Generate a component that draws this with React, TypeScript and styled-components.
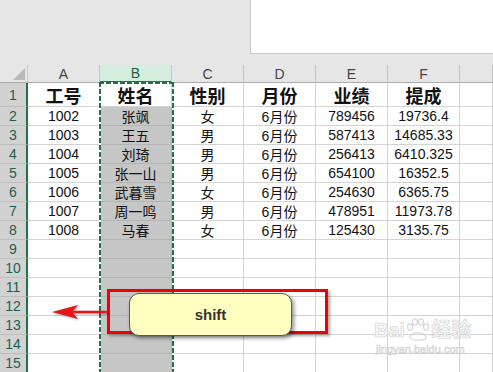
import React from 'react'
import styled, { createGlobalStyle } from 'styled-components'

const GlobalStyle = createGlobalStyle`
  body {
    margin: 0;
    overflow: hidden;
    background: #fff;
    font-family: "Liberation Sans", "Noto Sans CJK SC", sans-serif;
  }
`

const columns = ['A', 'B', 'C', 'D', 'E', 'F']

const rows: string[][] = [
  ['工号', '姓名', '性别', '月份', '业绩', '提成'],
  ['1002', '张飒', '女', '6月份', '789456', '19736.4'],
  ['1003', '王五', '男', '6月份', '587413', '14685.33'],
  ['1004', '刘琦', '男', '6月份', '256413', '6410.325'],
  ['1005', '张一山', '男', '6月份', '654100', '16352.5'],
  ['1006', '武暮雪', '女', '6月份', '254630', '6365.75'],
  ['1007', '周一鸣', '男', '6月份', '478951', '11973.78'],
  ['1008', '马春', '女', '6月份', '125430', '3135.75'],
]

const TOTAL_ROWS = 15

const App = () => {
  const sheetRows = Array.from({ length: TOTAL_ROWS }, (_, i) => rows[i] || ['', '', '', '', '', ''])

  return (
    <Page>
      <GlobalStyle />
      <Ribbon>
        <FormulaBox />
      </Ribbon>

      <Sheet>
        <Corner>
          <svg width="28" height="18" viewBox="0 0 28 18">
            <polygon points="25,3 25,15 13,15" fill="#b9b9b9" />
          </svg>
        </Corner>
        {columns.map((c) => (
          <ColHead key={c} $active={c === 'B'}>
            {c}
          </ColHead>
        ))}
        <ColHead $active={false} />

        {sheetRows.map((cells, r) => (
          <React.Fragment key={r}>
            <RowHead>{r + 1}</RowHead>
            {cells.map((text, c) => (
              <Cell key={c} $title={r === 0} $selected={c === 1 && r > 0}>
                {text}
              </Cell>
            ))}
            <Cell $title={false} $selected={false} />
          </React.Fragment>
        ))}
      </Sheet>

      <MarchingAnts />

      <RedFrame />
      <Callout>shift</Callout>
      <Arrow width="64" height="24" viewBox="0 0 64 24">
        <line x1="60" y1="12" x2="24" y2="12" stroke="#e8141b" strokeWidth="2.5" />
        <polygon points="4,12 30,5 24,12 30,19" fill="#e8141b" />
      </Arrow>

      <Watermark>
        <WatermarkLogo>
          Bai
          <svg width="26" height="24" viewBox="0 0 26 24">
            <g fill="none" stroke="#d6d6d6" strokeWidth="1.2">
              <ellipse cx="5" cy="9" rx="2.5" ry="3.2" />
              <ellipse cx="10" cy="4" rx="2.5" ry="3.2" />
              <ellipse cx="16" cy="4" rx="2.5" ry="3.2" />
              <ellipse cx="21" cy="9" rx="2.5" ry="3.2" />
              <path d="M5 20 C5 13 21 13 21 20 C21 23 5 23 5 20 Z" />
            </g>
          </svg>
          经验
        </WatermarkLogo>
        <WatermarkUrl>jingyan.baidu.com</WatermarkUrl>
      </Watermark>
    </Page>
  )
}

export default App

const Page = styled.div`
  position: relative;
  width: 493px;
  height: 372px;
  overflow: hidden;
`

const Ribbon = styled.div`
  height: 65px;
  background: #e6e6e6;
  display: flex;
  justify-content: flex-end;
  align-items: flex-start;
`

const FormulaBox = styled.div`
  width: 243px;
  height: 54px;
  box-sizing: border-box;
  background: #fff;
  border-left: 1px solid #c6c6c6;
  border-bottom: 1px solid #c6c6c6;
`

const Sheet = styled.div`
  display: grid;
  grid-template-columns: 28px repeat(6, 72px) 1fr;
  grid-template-rows: 18px 24px repeat(14, 19px);
`

const Corner = styled.div`
  background: #e6e6e6;
  border-right: 1px solid #c8c8c8;
  border-bottom: 1px solid #ababab;
  box-sizing: border-box;
  svg {
    display: block;
  }
`

const ColHead = styled.div<{ $active: boolean }>`
  box-sizing: border-box;
  display: flex;
  align-items: center;
  justify-content: center;
  font-size: 14px;
  color: ${(p) => (p.$active ? '#1f5f3e' : '#444')};
  background: ${(p) => (p.$active ? '#d3eedd' : '#e6e6e6')};
  border-right: 1px solid #c4c4c4;
  border-bottom: ${(p) => (p.$active ? '2px solid #217346' : '1px solid #ababab')};
`

const RowHead = styled.div`
  box-sizing: border-box;
  display: flex;
  align-items: center;
  justify-content: center;
  font-size: 14px;
  color: #1d5f4f;
  background: #d2d2d2;
  border-right: 2px solid #217346;
  border-bottom: 1px solid #bdbdbd;
`

const Cell = styled.div<{ $title: boolean; $selected: boolean }>`
  box-sizing: border-box;
  display: flex;
  align-items: center;
  justify-content: center;
  white-space: nowrap;
  overflow: hidden;
  font-size: ${(p) => (p.$title ? '18px' : '14px')};
  font-weight: ${(p) => (p.$title ? 700 : 400)};
  color: #111;
  background: ${(p) => (p.$selected ? '#c6c6c6' : '#fff')};
  border-right: 1px solid ${(p) => (p.$selected ? '#b4b4b4' : '#d4d4d4')};
  border-bottom: 1px solid ${(p) => (p.$selected ? '#b4b4b4' : '#d4d4d4')};
`

const ants = '#217346 0 5px, #fff 5px 7px'

const MarchingAnts = styled.div`
  position: absolute;
  left: 99px;
  top: 82px;
  width: 75px;
  bottom: 0;
  background:
    repeating-linear-gradient(90deg, ${ants}) top left / 100% 2px no-repeat,
    repeating-linear-gradient(180deg, ${ants}) top left / 2px 100% no-repeat,
    repeating-linear-gradient(180deg, ${ants}) top right / 2px 100% no-repeat;
`

const RedFrame = styled.div`
  position: absolute;
  left: 107px;
  top: 289px;
  width: 221px;
  height: 45px;
  box-sizing: border-box;
  border: 3px solid #f20000;
  box-shadow: 2px 2px 3px rgba(0, 0, 0, 0.35);
`

const Callout = styled.div`
  position: absolute;
  left: 129px;
  top: 293px;
  width: 163px;
  height: 43px;
  box-sizing: border-box;
  display: flex;
  align-items: center;
  justify-content: center;
  background: #ffffc0;
  border: 1px solid #5a5a5a;
  border-radius: 10px;
  box-shadow: 2px 2px 4px rgba(0, 0, 0, 0.45);
  font-size: 15px;
  font-weight: 700;
  color: #333;
`

const Arrow = styled.svg`
  position: absolute;
  left: 48px;
  top: 300px;
  filter: drop-shadow(1px 1px 1px rgba(0, 0, 0, 0.3));
`

const Watermark = styled.div`
  position: absolute;
  left: 374px;
  top: 318px;
  display: flex;
  flex-direction: column;
  align-items: flex-start;
  color: #f7f7f7;
  -webkit-text-stroke: 0.6px #d2d2d2;
  pointer-events: none;
`

const WatermarkLogo = styled.div`
  display: flex;
  align-items: center;
  font-size: 20px;
  font-weight: 700;
  line-height: 24px;
`

const WatermarkUrl = styled.div`
  font-size: 11px;
  line-height: 14px;
  margin-left: 2px;
`
